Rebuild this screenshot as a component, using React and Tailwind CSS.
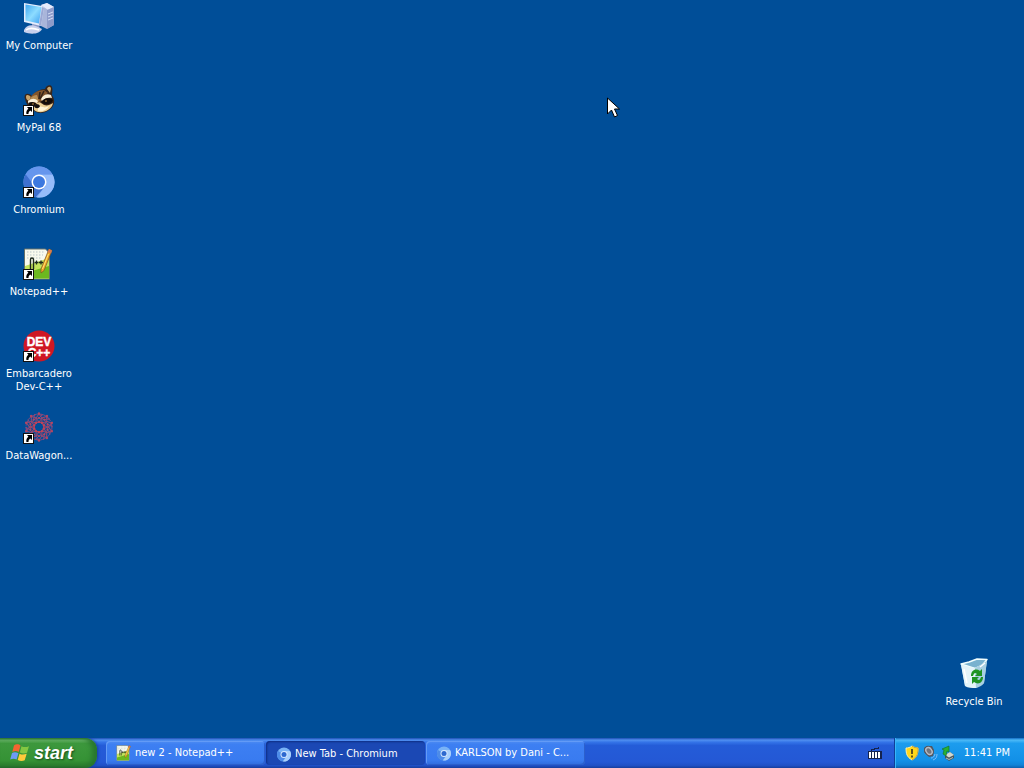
import React from "react";

function ShortcutArrow() {
  return (
    <g>
      <rect x="0.5" y="21.5" width="10" height="10" fill="#fff" stroke="#111" strokeWidth="1" />
      <path d="M4 23h5v5l-1.700-1.600c-1.300.9-1.900 1.900-1.800 3.600H3.400c-.4-2.100.3-3.900 2-5.200z" fill="#000" />
    </g>
  );
}

function Icon({ children, shortcut = true }) {
  return (
    <svg viewBox="0 0 32 32" className="size-8 shrink-0" aria-hidden="true">
      {children}
      {shortcut && <ShortcutArrow />}
    </svg>
  );
}

function ComputerIcon() {
  return (
    <Icon shortcut={false}>
      <defs>
        <linearGradient id="screen" x1="0" y1="0" x2="1" y2="1">
          <stop offset="0" stopColor="#3fa6f0" />
          <stop offset="0.5" stopColor="#8ddcff" />
          <stop offset="1" stopColor="#3d9ff0" />
        </linearGradient>
      </defs>
      <path d="M18 3l6-2 7 4v18l-7 4-8-4z" fill="#a9b5da" />
      <path d="M18 3l6-2 7 4-6 3z" fill="#e4eafc" />
      <path d="M24 8l7-3v18l-7 4z" fill="#8d9bca" />
      <path d="M25 12l5-2M25 15l5-2M25 18l5-2" stroke="#d5def6" />
      <path d="M9 21l7 2 1 4-8-2z" fill="#8b97c4" />
      <path d="M1 28c2-5 8-6 14-3l4 2c-2 5-11 6-18 3z" fill="#c8d0ec" />
      <path d="M3 28c3-2 8-2 13 0" stroke="#fff" fill="none" strokeWidth="1.5" />
      <path d="M1 1l18 3 2 2-3 18-17-4z" fill="#e4ecfc" />
      <path d="M2.500 2.500L18.500 5 16 21.500 2.500 18.500z" fill="url(#screen)" />
      <path d="M21 6l-3 18-2-1 3-18z" fill="#9aa8d4" />
    </Icon>
  );
}

function RaccoonIcon() {
  return (
    <Icon>
      <path d="M2 15c-2-5 3-7 7-3C12 8 17 5 22 5c1-4 6-5 7-2s0 5 0 8c4 6 2 12-3 15-5 4-12 4-16 0-5-3-7-7-8-11z" fill="#3a2518" />
      <path d="M3 13c0-3 3-2 5 0l-2 4c-2-1-3-2-3-4zM24 5c1-3 4-3 4 0l-1 4z" fill="#c9a46a" />
      <path d="M7 15c2-6 8-9 14-9l4 3c-3 2-5 4-6 8-3 1-5 2-6 4-3 0-5-2-6-6z" fill="#81552c" />
      <path d="M7 15c2-3 4-4 7-4l2 6-5 4c-3-1-4-3-4-6z" fill="#b88c51" />
      <path d="M5 17c4-3 7-3 10 0l-1 2c-3-1-6-1-9 1zM18 15c2-4 6-6 10-4l1 3c-4-1-7 0-10 3z" fill="#f9efd7" />
      <path d="M5 19c4-2 8-1 9 2-1 3-4 3-7 1zM18 18c3-4 8-5 12-2-1 4-5 5-9 4z" fill="#130c09" />
      <path d="M14 19c2-1 3-1 4 0l3 2c3 1 6 0 9-2-1 6-8 10-15 9-4-1-5-3-4-6z" fill="#eccf94" />
      <path d="M15 22l5 1c2 1 4 0 6-1-2 4-7 6-11 5z" fill="#fff5d9" />
      <path d="M11 21c2-2 5-1 6 1-1 3-5 3-6 0z" fill="#15100e" />
      <path d="M17 8l-1 7M21 7l-4 8" stroke="#342419" strokeWidth="1.6" />
      <circle cx="10" cy="20" r="0.8" fill="#d8a14b" />
      <circle cx="23" cy="17" r="0.8" fill="#d8a14b" />
    </Icon>
  );
}

function ChromiumMark() {
  return (
    <g>
      <circle cx="16" cy="16" r="15.5" fill="#78a5f4" />
      <path d="M16 16L2.600 8.300a15.500 15.500 0 0 0 10 22.900L23 19.500z" fill="#3e70cf" />
      <path d="M16 8.500h13.500a15.500 15.500 0 0 1-15.500 22.900l8.500-11.600z" fill="#96bcfa" />
      <path d="M2.600 8.300A15.500 15.500 0 0 1 29.500 8.500H16c-4 0-7 3-7.500 7.500z" fill="#6696ed" />
      <circle cx="16" cy="16" r="7.5" fill="#fff" />
      <circle cx="16" cy="16" r="6" fill="#3c78df" />
    </g>
  );
}

function ChromiumSmall() {
  return (
    <g>
      <circle cx="16" cy="17" r="14" fill="#79b3f6" />
      <path d="M4 10a14 14 0 0 0 9 21l8-11z" fill="#4d8be8" />
      <path d="M16 10h12a14 14 0 0 1-14 21l8-11z" fill="#a9d0fc" />
      <circle cx="16" cy="17" r="7" fill="#d6e9ff" />
      <circle cx="16" cy="17" r="5" fill="#2d69cf" />
    </g>
  );
}

function NotepadMark() {
  return (
    <g>
      <path d="M1.500 1h21l4 4v26h-25z" fill="#f8faed" stroke="#65716a" />
      <path d="M2 18l24-8v20.500H2z" fill="#c3e35c" />
      <path d="M2 25l24-7v12.500H2z" fill="#6cb81f" />
      <path d="M4 4h17M4 7h16M4 10h15" stroke="#bac5c8" strokeDasharray="1.5 1.5" />
      <path d="M7.500 21V11.500c0-2 3-2 3 0V21" fill="none" stroke="#1d281c" strokeWidth="1.4" />
      <path d="M11.500 14.500h4m-2-2v4M16 14.500h4m-2-2v4" stroke="#1d281c" strokeWidth="1.3" />
      <path d="M26 1l3 1.500-8 20-3 2.500v-4z" fill="#f2a924" stroke="#785022" strokeWidth="0.7" />
      <path d="M26 1l3 1.500-1 3-3.500-1.500z" fill="#d97b52" />
      <path d="M25.500 6l-6 15" stroke="#ffe373" />
    </g>
  );
}

function DevIcon() {
  return (
    <Icon>
      <circle cx="16" cy="16" r="15.5" fill="#cf1724" />
      <g fill="#fff" stroke="#fff" strokeWidth="0.4" fontFamily="'Liberation Sans', sans-serif" fontWeight="700" fontSize="12" textAnchor="middle">
        <text x="16" y="16">DEV</text>
        <text x="16" y="27">C++</text>
      </g>
    </Icon>
  );
}

function WagonIcon() {
  const spokes = [0, 36, 72, 108, 144, 180, 216, 252, 288, 324];
  return (
    <Icon>
      <g fill="none" stroke="#7d4a80" strokeWidth="1" transform="translate(16 15)">
        <circle r="5" stroke="#b0405f" strokeWidth="1.6" />
        <circle r="9" />
        <circle r="13" strokeDasharray="5 2" />
        {spokes.map((angle) => (
          <g key={angle} transform={`rotate(${angle})`}>
            <path d="M0-5L3-9 0-13-3-9z" stroke="#99486f" />
            <path d="M0-13l4 1M0-9l4-4" />
            <circle cy="-13.5" r="1.2" fill="#b44662" stroke="none" />
            <circle cy="-9" r="1.1" fill="#b44662" stroke="none" />
            <circle cy="-5" r="1.1" fill="#c34359" stroke="none" />
          </g>
        ))}
      </g>
    </Icon>
  );
}

function RecycleIcon() {
  return (
    <Icon shortcut={false}>
      <path d="M3 6h12l14-4-3 23-8 5-11-2z" fill="#c9e5ef" />
      <path d="M3 6l8-2 8-3 10 .5-5 6-7 3z" fill="#79b2cf" />
      <path d="M3 6l8-2 8-3 10 .5-5 6-7 3z" fill="none" stroke="#f2ffff" strokeWidth="1.5" strokeLinejoin="round" />
      <path d="M3 7l14 3 1 20c-4 0-8 0-11-2z" fill="#e4f4f9" />
      <path d="M17 10l12-7-3 22c-2 3-5 4-8 5z" fill="#a8d0e2" />
      <path d="M6 11l3 14M22 9l5-4" stroke="#fff" strokeWidth="1.5" />
      <g fill="#1f9423">
        <path d="M13 18c0-6 5-8 9-5l2-2v7h-7l2-2c-2-2-3-1-4 2z" />
        <path d="M25 19c0 6-5 8-9 5l-2 2v-7h7l-2 2c2 2 3 1 4-2z" />
      </g>
    </Icon>
  );
}

function WindowsFlag() {
  return (
    <svg viewBox="0 0 20 20" className="size-5 shrink-0" aria-hidden="true">
      <path d="M4 2.500c3-2 5-1 6.500 0L8.700 9C6.500 7.500 4.500 8 2.300 9z" fill="#f36531" />
      <path d="M11.500 3.200c2.500 1.400 5 1 7.500 0l-2 6.600c-2.300 1-4.500 1-7.200-.3z" fill="#83c742" />
      <path d="M2 10c2-1 4-1 6.400.2l-1.800 6.300c-2-1-4.300-1-6.400 0z" fill="#6d9bf5" />
      <path d="M9.500 10.700c2.500 1.200 4.500 1 7.200.1l-2 6.400c-2.200 1-4.500 1-7-.2z" fill="#ffca3b" />
    </svg>
  );
}

function DesktopItem({ label, children }) {
  return (
    <button type="button" className="flex w-[78px] flex-col items-center gap-[5px] text-center text-[11px] leading-[13px] text-white">
      {children}
      <span className="w-full">{label}</span>
    </button>
  );
}

function TaskButton({ label, active = false, children }) {
  return (
    <button
      type="button"
      aria-pressed={active}
      className={
        "flex h-6 min-w-0 max-w-[159px] flex-1 items-center gap-[3px] rounded-sm px-[10px] text-left text-[11px] text-white " +
        (active
          ? "bg-[#1b48b4] pt-[2px] shadow-[inset_1px_1px_2px_#0e2d83]"
          : "bg-[linear-gradient(#4e8cf2_0%,#3d7ff2_15%,#397bf0_80%,#306bdc_100%)] shadow-[inset_1px_1px_0_#639bf6,inset_-1px_-1px_0_#2c60cc]")
      }
    >
      <svg viewBox="0 0 32 32" className="size-4 shrink-0" aria-hidden="true">{children}</svg>
      <span className="truncate">{label}</span>
    </button>
  );
}

function TrayIcons() {
  return (
    <div className="flex items-center gap-[2px]">
      <svg viewBox="0 0 16 16" className="size-4" aria-label="Security alerts">
        <path d="M8 1c2 1.500 4 2 6 2 0 6-1 9-6 12C3 12 2 9 2 3c2 0 4-.5 6-2z" fill="#ffd719" stroke="#fff0a0" />
        <path d="M8 1c2 1.500 4 2 6 2 0 6-1 9-6 12" fill="none" stroke="#c99a22" />
        <path d="M8 4v5M8 10.500v2" stroke="#3c3420" strokeWidth="1.6" />
      </svg>
      <svg viewBox="0 0 16 16" className="size-4" aria-label="Volume">
        <path d="M2 3l3-2h5l2 4-1 6-4 1-5-5z" fill="#55575d" />
        <ellipse cx="7" cy="6" rx="4" ry="5" fill="#b7bac0" stroke="#4b515d" transform="rotate(-35 7 6)" />
        <ellipse cx="7" cy="6" rx="2" ry="3" fill="#70757f" transform="rotate(-35 7 6)" />
        <path d="M9 13c2 0 3-1 4-4M11 15c3-1 4-3 4-6" fill="none" stroke="#7dbcfa" />
      </svg>
      <svg viewBox="0 0 16 16" className="size-4" aria-label="Safely remove hardware">
        <path d="M5 10l5-3 4 3v3l-5 3-4-3z" fill="#48565b" />
        <path d="M5 10l5-3 4 3-5 2.500z" fill="#d2d8d0" />
        <path d="M6 13l3 1.500 4-2" stroke="#b3bebe" fill="none" />
        <path d="M2 4l7-3v6l-2-1-1 5-3-2 1-4z" fill="#27b033" stroke="#126f27" strokeWidth="0.6" />
      </svg>
    </div>
  );
}

function Keyboard() {
  return (
    <button type="button" aria-label="Language bar" className="mr-3 flex items-center">
      <svg viewBox="0 0 14 14" className="size-[14px]" shapeRendering="crispEdges">
        <path d="M3 5V3h3V2h4V1" stroke="#14234f" fill="none" />
        <rect x="0" y="5" width="14" height="8" fill="#14234f" />
        <path d="M1 7h12M1 9h12M1 11h12" stroke="#fff" strokeWidth="1.4" strokeDasharray="2 1" />
      </svg>
    </button>
  );
}

export default function App() {
  return (
    <div className="relative flex min-h-screen flex-col bg-[#004e98] font-['DejaVu_Sans_Condensed','Noto_Sans',sans-serif]">
      <main className="flex flex-1 items-stretch justify-between">
        <div className="grid auto-rows-[82px] content-start items-start pt-[2px]">
          <DesktopItem label="My Computer"><ComputerIcon /></DesktopItem>
          <DesktopItem label="MyPal 68"><RaccoonIcon /></DesktopItem>
          <DesktopItem label="Chromium"><Icon><ChromiumMark /></Icon></DesktopItem>
          <DesktopItem label="Notepad++"><Icon><NotepadMark /></Icon></DesktopItem>
          <DesktopItem label="Embarcadero Dev-C++"><DevIcon /></DesktopItem>
          <DesktopItem label="DataWagon..."><WagonIcon /></DesktopItem>
        </div>
        <div className="flex items-end pr-[11px] pb-[30px]">
          <DesktopItem label="Recycle Bin"><RecycleIcon /></DesktopItem>
        </div>
      </main>
      <footer className="flex h-[30px] items-stretch bg-[linear-gradient(#1d4fb5_0%,#508ff0_7%,#3474e8_14%,#245cd8_25%,#2458d5_80%,#2050c5_92%,#173d9c_100%)]">
        <button
          type="button"
          className="mr-[9px] flex w-[97px] shrink-0 items-center gap-1 rounded-r-xl bg-[linear-gradient(#267231_0%,#67b467_7%,#3d983d_18%,#359235_75%,#2b7e2e_92%,#205e29_100%)] pl-[10px] shadow-[inset_-5px_0_5px_#28772e,1px_0_3px_#173f9f]"
        >
          <WindowsFlag />
          <span className="font-['Liberation_Sans',sans-serif] text-[18px] leading-6 font-bold text-white italic text-shadow-[1px_1px_2px_#174d1b]">start</span>
        </button>
        <nav aria-label="Open windows" className="flex min-w-0 flex-1 items-center gap-px">
          <TaskButton label="new 2 - Notepad++"><NotepadMark /></TaskButton>
          <TaskButton label="New Tab - Chromium" active><ChromiumSmall /></TaskButton>
          <TaskButton label="KARLSON by Dani - C..."><ChromiumSmall /></TaskButton>
        </nav>
        <Keyboard />
        <div className="flex shrink-0 items-center gap-2 border-l border-[#103f98] bg-[linear-gradient(#136cc4_0%,#4bb9f7_7%,#1c9cee_18%,#1290e7_75%,#1183d8_90%,#0d60ae_100%)] pr-[14px] pl-[9px] text-[11px] text-white shadow-[inset_1px_0_0_#38b6fa]">
          <TrayIcons />
          <time>11:41 PM</time>
        </div>
      </footer>
      <svg viewBox="0 0 13 21" className="absolute top-[97px] left-[607px] h-[21px] w-[13px]" aria-hidden="true">
        <path d="M.5 1v16l4-4 3 7 3-1.500-3-6.500h5z" fill="#fff" stroke="#000" />
      </svg>
    </div>
  );
}
